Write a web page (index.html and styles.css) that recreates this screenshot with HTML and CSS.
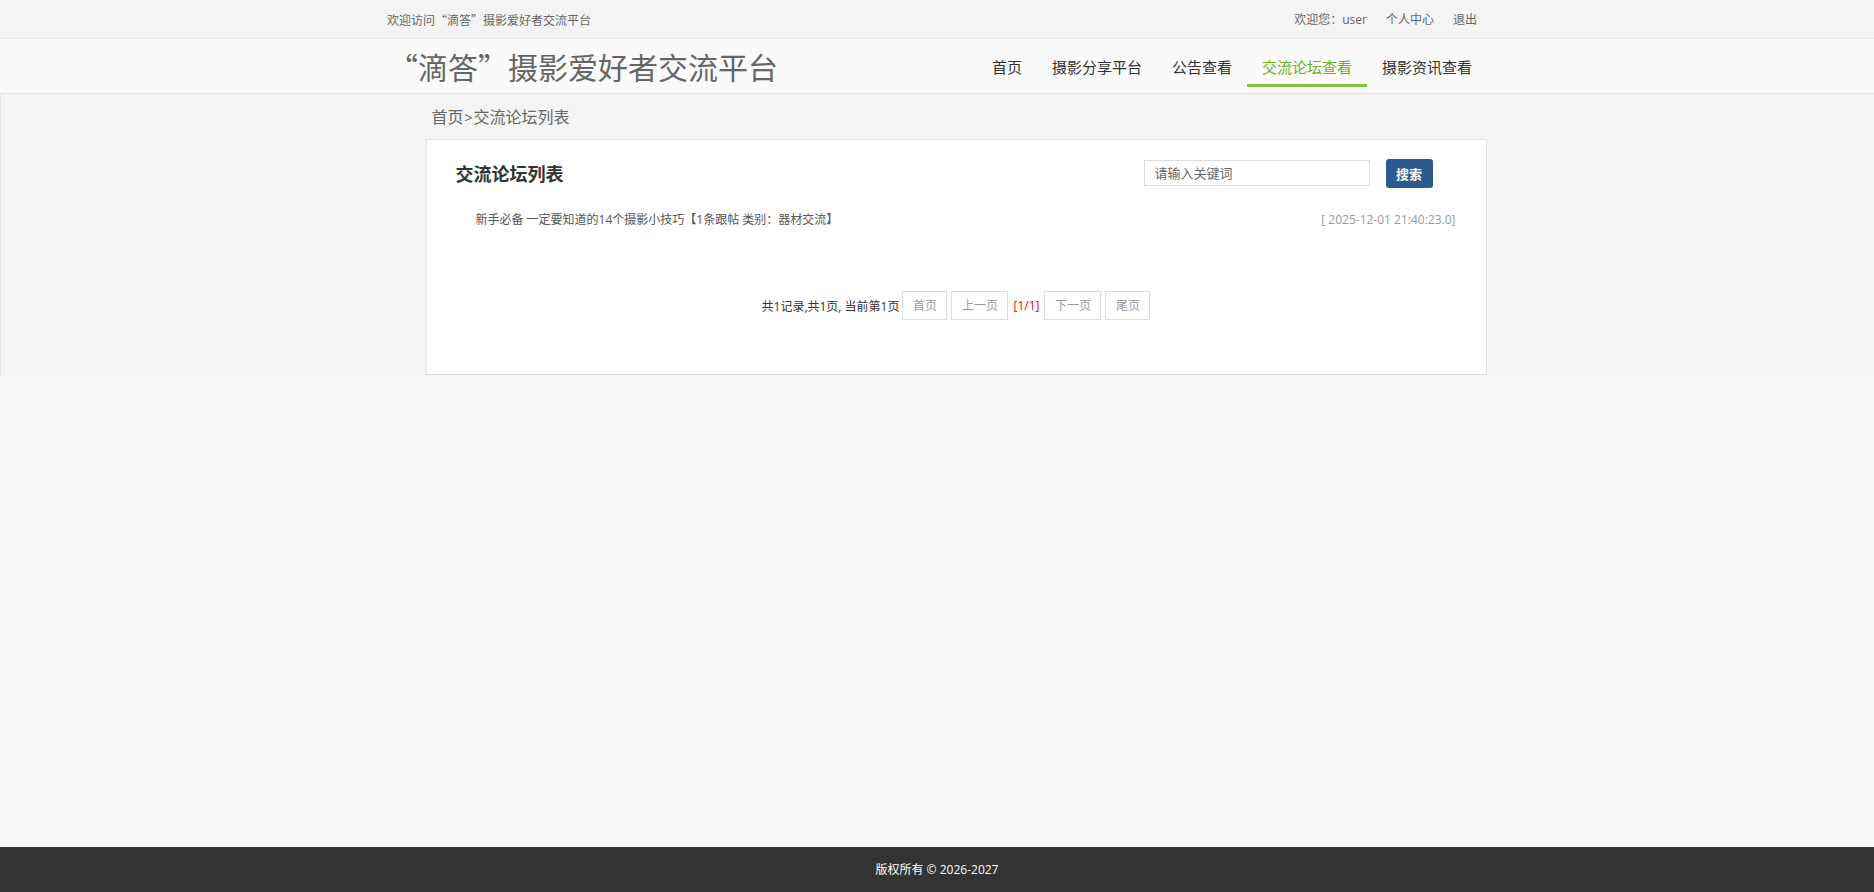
FILE: index.html
```html
<!DOCTYPE html>
<html lang="zh-CN">
<head>
<meta charset="utf-8">
<title>交流论坛列表</title>
<link rel="stylesheet" href="styles.css">
</head>
<body>
<div class="topbar">
  <div class="container topbar-inner">
    <span class="welcome">欢迎访问“滴答”摄影爱好者交流平台</span>
    <div class="user-links">
      <span>欢迎您：user</span>
      <a href="#">个人中心</a>
      <a href="#">退出</a>
    </div>
  </div>
</div>
<header class="header">
  <div class="container header-inner">
    <div class="logo">“滴答”摄影爱好者交流平台</div>
    <nav class="nav">
      <a href="#" class="nav-item">首页</a>
      <a href="#" class="nav-item">摄影分享平台</a>
      <a href="#" class="nav-item">公告查看</a>
      <a href="#" class="nav-item active">交流论坛查看</a>
      <a href="#" class="nav-item">摄影资讯查看</a>
    </nav>
  </div>
</header>
<section class="main">
  <div class="container main-inner">
    <div class="breadcrumb"><a href="#">首页</a><span class="sep">&gt;</span><span>交流论坛列表</span></div>
    <div class="card">
      <div class="card-head">
        <h2 class="card-title">交流论坛列表</h2>
        <div class="search">
          <input class="search-input" type="text" placeholder="请输入关键词">
          <button class="search-btn" type="button">搜索</button>
        </div>
      </div>
      <ul class="list">
        <li class="list-item">
          <a href="#" class="item-title">新手必备 一定要知道的14个摄影小技巧【1条跟帖 类别：器材交流】</a>
          <span class="item-date">[ 2025-12-01 21:40:23.0]</span>
        </li>
      </ul>
      <div class="pager">
        <span class="pager-info">共1记录,共1页, 当前第1页</span>
        <a href="#" class="pager-btn">首页</a>
        <a href="#" class="pager-btn">上一页</a>
        <span class="pager-cur">[1/1]</span>
        <a href="#" class="pager-btn">下一页</a>
        <a href="#" class="pager-btn">尾页</a>
      </div>
    </div>
  </div>
</section>
<div class="spacer"></div>
<footer class="footer">版权所有 © 2026-2027</footer>
</body>
</html>
```
FILE: styles.css
```css
* { box-sizing: border-box; }
html, body { margin: 0; padding: 0; }
body {
  min-height: 100vh;
  display: flex;
  flex-direction: column;
  background: #fafafa;
  font-family: "Open Sans", "Noto Sans CJK SC", sans-serif;
  font-size: 12px;
  color: #333;
}
a { text-decoration: none; color: inherit; }
ul { list-style: none; margin: 0; padding: 0; }

.container { width: 1100px; margin: 0 auto; }

.topbar {
  height: 39px;
  background: #f4f4f4;
  border-bottom: 1px solid #ececec;
}
.topbar-inner {
  height: 38px;
  display: flex;
  align-items: center;
  justify-content: space-between;
  padding-right: 10px;
  color: #666;
  font-size: 12px;
}
.welcome { font-family: "Noto Sans CJK SC", sans-serif; }
.user-links { display: flex; gap: 19px; }

.header {
  height: 55px;
  background: #fafafa;
  border-bottom: 1px solid #e4e4e4;
}
.header-inner {
  height: 54px;
  display: flex;
  justify-content: space-between;
}
.logo {
  padding-left: 1px;
  font-family: "Noto Sans CJK SC", sans-serif;
  font-size: 30px;
  line-height: 54px;
  color: #666;
}
.nav {
  display: flex;
  align-items: flex-end;
  padding-bottom: 6px;
}
.nav-item {
  padding: 3px 15px 0;
  line-height: 34px;
  font-size: 15px;
  color: #333;
  border-bottom: 3px solid transparent;
}
.nav-item.active {
  color: #6cb21f;
  border-bottom-color: #82c43c;
}

.main {
  background: #f4f4f4;
  border-left: 1px solid #e6e6e6;
  padding: 11px 0 1px;
}
.main-inner { padding-left: 38px; padding-right: 1px; }
.breadcrumb {
  padding-left: 6px;
  font-size: 16px;
  line-height: 24px;
  color: #666;
  margin-bottom: 9px;
}
.breadcrumb .sep { font-size: 14px; margin: 0 1px; }

.card {
  background: #fff;
  border: 1px solid #e6e6e6;
  border-bottom-color: #dcdcdc;
  padding: 13px 0 54px;
}
.card-head {
  height: 40px;
  display: flex;
  align-items: center;
  justify-content: space-between;
  padding: 0 53px 0 29px;
}
.card-title {
  margin: 0;
  font-size: 18px;
  font-weight: bold;
  color: #333;
}
.search { display: flex; align-items: center; gap: 16px; }
.search-input {
  width: 226px;
  height: 26px;
  border: 1px solid #dcdcdc;
  padding: 0 10px;
  font-family: inherit;
  font-size: 13px;
  color: #333;
  outline: none;
  background: #fff;
}
.search-input::placeholder { color: #666; }
.search-btn {
  width: 47px;
  height: 29px;
  border: none;
  border-radius: 3px;
  background: #2c5a8e;
  color: #fff;
  font-family: inherit;
  font-size: 13px;
  font-weight: bold;
  padding: 0;
}

.list { margin-top: 15px; padding: 0 30px 0 49px; }
.list-item {
  display: flex;
  justify-content: space-between;
  line-height: 24px;
  font-size: 12px;
}
.item-title { color: #555; }
.item-date { color: #999; }

.pager {
  margin-top: 59px;
  display: flex;
  justify-content: center;
  align-items: center;
  gap: 4px;
  font-size: 12px;
}
.pager-info { color: #333; margin-right: -1px; }
.pager-btn {
  height: 29px;
  line-height: 27px;
  padding: 0 9.5px;
  border: 1px solid #dcdcdc;
  color: #999;
  background: #fff;
}
.pager-cur { color: #f00; margin: 0 1px; }

.spacer { flex: 1; }
.footer {
  height: 45px;
  line-height: 45px;
  background: #333;
  color: #fff;
  text-align: center;
  font-size: 12px;
}
```
